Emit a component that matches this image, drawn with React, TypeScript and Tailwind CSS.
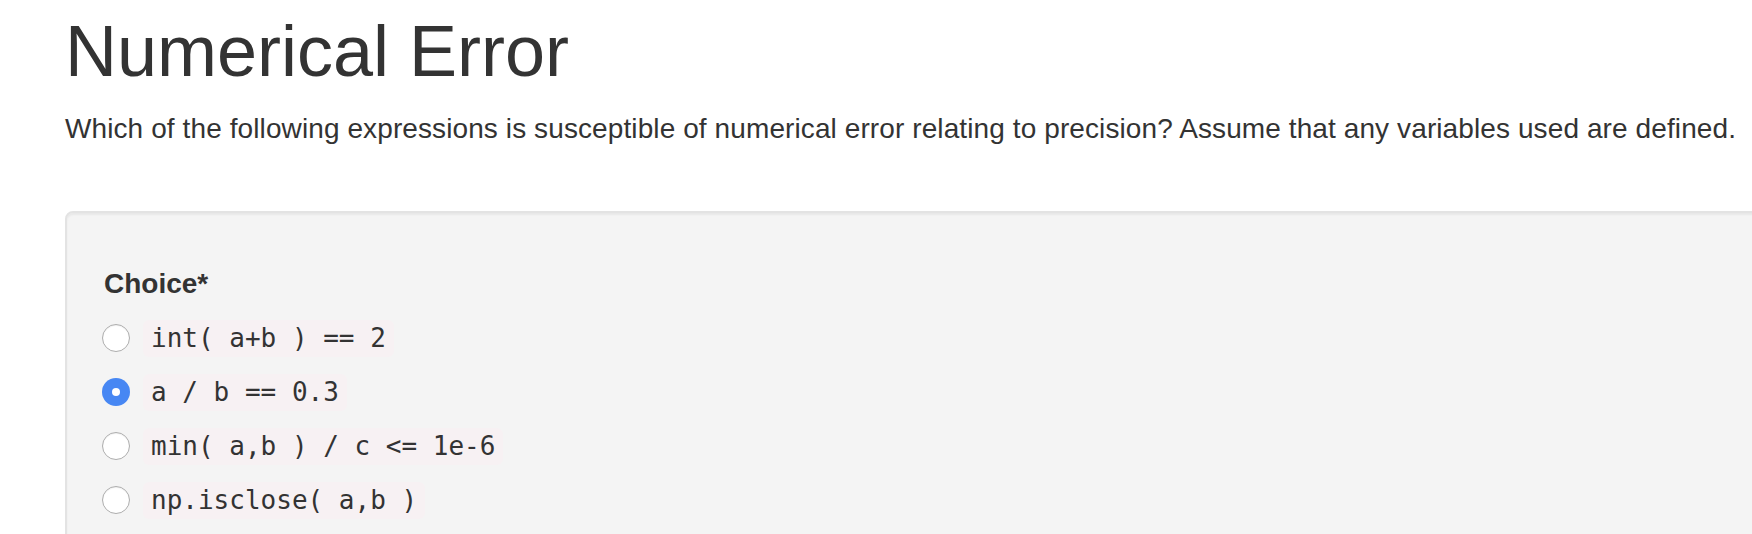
import React from "react";

const choices = [
  { text: "int( a+b ) == 2", checked: false },
  { text: "a / b == 0.3", checked: true },
  { text: "min( a,b ) / c <= 1e-6", checked: false },
  { text: "np.isclose( a,b )", checked: false },
];

function Radio({ checked }: { checked: boolean }) {
  if (checked) {
    return (
      <span className="flex h-[28px] w-[28px] shrink-0 items-center justify-center rounded-full bg-[#4787f3]">
        <span className="h-[8px] w-[8px] rounded-full bg-white" />
      </span>
    );
  }
  return (
    <span className="block h-[28px] w-[28px] shrink-0 rounded-full border border-[#adadad] bg-white shadow-[inset_0_1px_1px_rgba(0,0,0,0.06)]" />
  );
}

export default function App() {
  return (
    <div
      className="h-[534px] w-full overflow-hidden bg-white text-[#333333]"
      style={{ fontFamily: '"Liberation Sans", Arial, Helvetica, sans-serif' }}
    >
      <div className="pl-[65px]">
        <h1 className="mt-[12px] mb-[18px] text-[72px] font-normal leading-[79px] whitespace-nowrap">
          Numerical Error
        </h1>
        <p className="text-[28px] leading-[40px] tracking-[0.1px] whitespace-nowrap">
          Which of the following expressions is susceptible of numerical error relating to precision? Assume that any variables used are defined.
        </p>
        <div className="mt-[62px] -mr-[40px] rounded-[8px] border-2 border-[#e3e3e3] bg-[#f4f4f4] pl-[37px] pt-[51px] pb-[60px] shadow-[inset_0_2px_2px_rgba(0,0,0,0.05)]">
          <div className="text-[28px] font-bold leading-[40px]">Choice*</div>
          <div className="mt-[7px] flex flex-col">
            {choices.map((c) => (
              <label key={c.text} className="-ml-[2px] flex h-[54px] items-center gap-[13px]">
                <Radio checked={c.checked} />
                <code
                  className="flex h-[37px] items-center rounded-[6px] bg-[#f7f1f3] px-[8px] text-[26px] text-[#333333] whitespace-pre"
                  style={{ fontFamily: '"DejaVu Sans Mono", Menlo, monospace' }}
                >
                  {c.text}
                </code>
              </label>
            ))}
          </div>
        </div>
      </div>
    </div>
  );
}
